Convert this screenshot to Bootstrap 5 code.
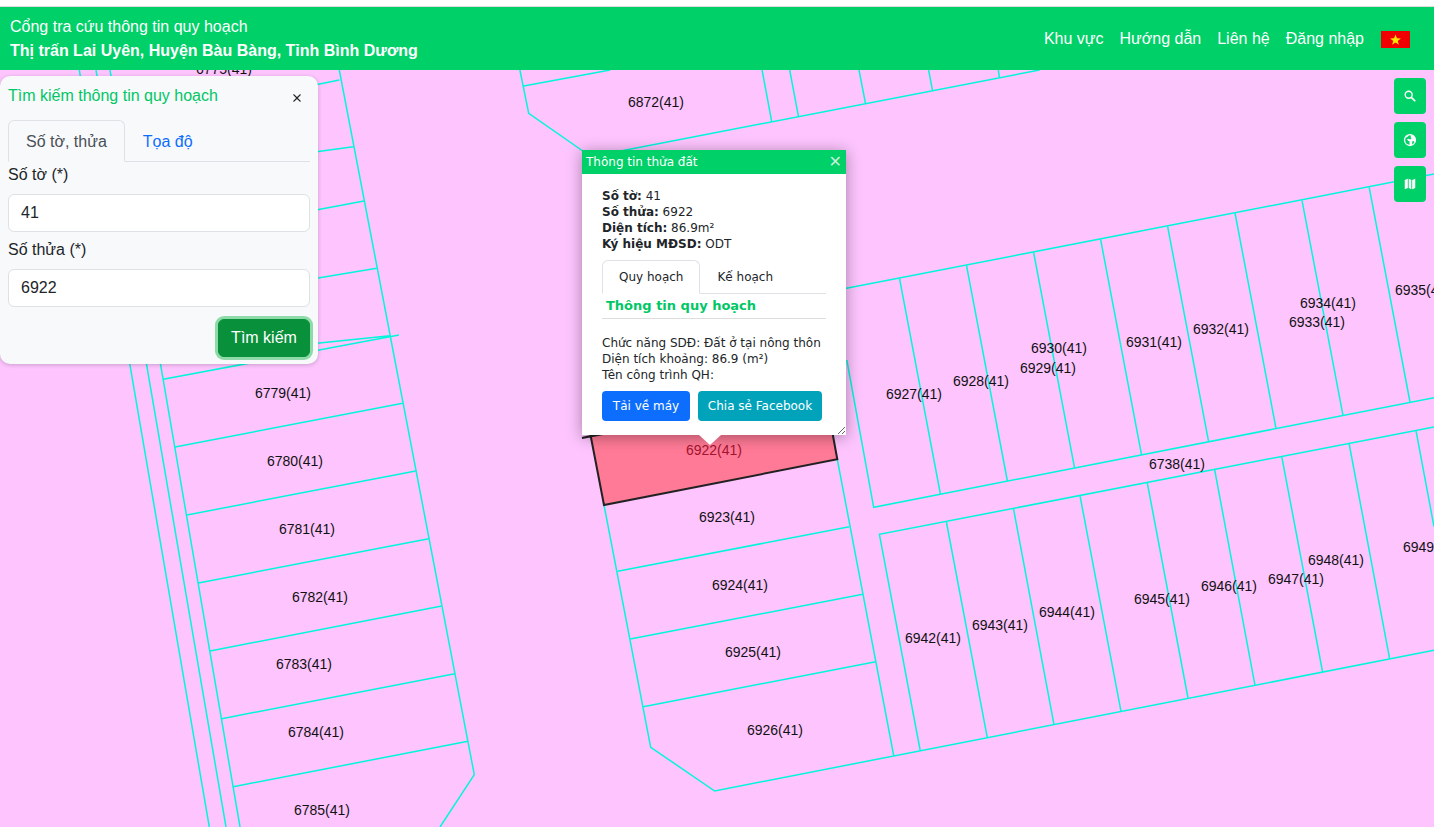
<!DOCTYPE html>
<html lang="vi">
<head>
  <meta charset="utf-8" />
  <meta name="viewport" content="width=device-width, initial-scale=1" />
  <title>Cổng tra cứu thông tin quy hoạch</title>
  <link href="https://cdn.jsdelivr.net/npm/bootstrap@5.3.2/dist/css/bootstrap.min.css" rel="stylesheet" />
  <style>
    html, body { height: 100%; }
    body {
      font-family: "Liberation Sans", Arial, sans-serif;
      overflow: hidden;
      background: #fff;
    }
    .pagina { height: 827px; padding-top: 6px; }
    .cabecera {
      height: 64px;
      background: #00d068;
      border-top: 1px solid #ddd;
      padding: 0 24px 0 10px;
      color: #fff;
      flex-shrink: 0;
    }
    .cabecera .nav-link { color: #fff; padding: 8px; }
    .cabecera-titulo { line-height: 24px; padding-top: 1px; }
    .bandera { width: 29px; height: 17px; margin-left: 9px; margin-top: 2px; display: block; }

    .mapa { background: #fdc4fe; overflow: hidden; }
    .mapa svg.capa { position: absolute; left: 0; top: 0; width: 1434px; height: 757px; }
    .lineas { fill: none; stroke: #00f7dc; stroke-width: 1.5; }
    .rotulos text { font-size: 14px; fill: #111; text-anchor: middle; font-family: "Liberation Sans", Arial, sans-serif; }
    .rotulos text.sel { fill: #a3142f; }

    .panel-busqueda {
      position: absolute;
      left: 0; top: 6px;
      width: 318px; height: 288px;
      background: #f8f9fa;
      border-radius: 10px;
      box-shadow: 0 1px 4px rgba(0,0,0,.2);
      padding: 8px;
    }
    .panel-titulo { color: #00c766; line-height: 24px; height: 36px; }
    .panel-busqueda .btn-close { width: 10px; height: 10px; padding: 0; background-size: 10px; opacity: .85; margin: 9px 8px 0 0; }
    .panel-busqueda .nav-tabs .nav-link { padding: 8px 17px; height: 42px; color: #0d6efd; line-height: 25px; }
    .panel-busqueda .nav-tabs .nav-link.active { background: #f8f9fa; color: #495057; border-bottom-color: #f8f9fa; }
    .panel-busqueda .form-label { margin: 0; line-height: 24px; height: 32px; color: #212529; display: block; padding-top: 1px; }
    .panel-busqueda .form-control { height: 38px; margin-bottom: 5px; }
    .btn-buscar {
      background: #08903a; border-color: #08903a; color: #fff;
      box-shadow: 0 0 0 3px #8edaa8;
      width: 92px; height: 38px; padding: 0;
      margin-top: 7px;
    }

    .herramientas { position: absolute; right: 8px; top: 8px; width: 32px; }
    .btn-mapa {
      width: 32px; height: 36px; padding: 0;
      background: #00d068; border-radius: 4px; border: 0;
      color: #fff;
    }
    .btn-mapa svg { width: 14px; height: 14px; display: block; }

    .emergente {
      position: absolute; left: 582px; top: 80px; width: 264px;
      font-family: "DejaVu Sans", Verdana, sans-serif;
      font-size: 12px; line-height: 16px; color: #212529;
    }
    .emergente-caja {
      background: #fff; height: 285px; width: 264px;
      box-shadow: 0 2px 14px rgba(0,0,0,.35);
      overflow: hidden; resize: both;
    }
    .emergente-titulo {
      background: #00d068; color: #fff; height: 24px; line-height: 24px;
      padding: 0 4px;
    }
    .emergente-cerrar { color: #c9eeda; font-weight: 700; font-size: 16px; line-height: 24px; }
    .emergente-cuerpo { padding: 14px 20px 0; }
    .emergente .nav-tabs { margin-top: 8px; }
    .emergente .nav-tabs .nav-link { padding: 0 16px; height: 34px; line-height: 33px; color: #212529; font-size: 12px; }
    .emergente .nav-tabs .nav-link.active { color: #212529; }
    .subtitulo { color: #00c766; font-weight: 700; padding: 3px 4px 4px; font-size: 13px; height: 25px; line-height: 18px; border-bottom: 1px solid #ddd; margin-bottom: 16px; }
    .emergente .btn { font-size: 12px; height: 30px; padding: 0; line-height: 30px; border: 0; color: #fff; border-radius: 4px; }
    .btn-bajar { width: 88px; background: #0d6efd; }
    .btn-compartir { width: 124px; background: #01a3bb; }
    .punta {
      position: absolute; left: 117px; top: 285px; width: 0; height: 0;
      border-left: 11px solid transparent; border-right: 11px solid transparent;
      border-top: 10px solid #fff;
    }
  </style>
</head>
<body>
  <div class="pagina d-flex flex-column">
    <!-- barra superior -->
    <header class="cabecera d-flex align-items-center justify-content-between">
      <div class="cabecera-titulo">
        <div>Cổng tra cứu thông tin quy hoạch</div>
        <div class="fw-bold">Thị trấn Lai Uyên, Huyện Bàu Bàng, Tỉnh Bình Dương</div>
      </div>
      <ul class="nav align-items-center">
        <li class="nav-item"><a class="nav-link" href="#">Khu vực</a></li>
        <li class="nav-item"><a class="nav-link" href="#">Hướng dẫn</a></li>
        <li class="nav-item"><a class="nav-link" href="#">Liên hệ</a></li>
        <li class="nav-item"><a class="nav-link" href="#">Đăng nhập</a></li>
        <li class="nav-item">
          <svg class="bandera" viewBox="0 0 29 17"><rect width="29" height="17" fill="#f00000"/><polygon fill="#ffe600" points="14.5,3.5 15.9,7.3 19.9,7.4 16.7,9.9 17.9,13.7 14.5,11.5 11.1,13.7 12.3,9.9 9.1,7.4 13.1,7.3"/></svg>
        </li>
      </ul>
    </header>

    <!-- mapa -->
    <main class="mapa flex-grow-1 position-relative">
      <svg class="capa" viewBox="0 70 1434 757">
        <g class="lineas">
          <!-- franja izquierda -->
          <path d="M79.3 70L209.3 827M96 70L226 827M110 70L240 827M339.3 70L474.3 774.7L440 827"/>
          <path d="M300 88L339.3 80M300 154L353.3 146.7M300 213L364 201M300 281L376.7 268.3M300 345L390 335.7M163.3 379.3L399 335M175 447L402.7 403.3M187 515L415.7 471M198.3 583L428.7 538.7M210 651L441.7 606M221.7 718.7L454.7 673.7M233.3 786.7L468 741.3"/>
          <!-- arriba centro -->
          <path d="M519.9 70L528.7 113.3L590 156M523.7 86L610.2 70M600 155L1039.6 70"/>
          <path d="M762.1 70L771.7 121.7M789.7 70L798.5 116.7M859 70L865.5 103.3M928.6 70L932.5 90.3M998.3 70L999.4 77.3"/>
          <!-- bloque central -->
          <path d="M604 505L650.7 747.3L714.7 791L1434 650.3M837.3 459.3L893.8 756"/>
          <path d="M617.7 571.3L849.3 526.7M630.3 639L862.7 594.3M643.3 706.7L875.7 661.7"/>
          <!-- bloque superior -->
          <path d="M840 289.6L1434 174M846.8 360L873.7 507.3L1434 397.7"/>
          <path d="M899.5 278.3L940.4 494M966.5 265.3L1007.4 481M1033.6 252.3L1074.5 467.7M1100.6 239.3L1141.5 454.7M1167.6 226.3L1208.6 441.7M1235 213L1276 428.3M1302 200.3L1343 415.3M1369.2 187.3L1410 402"/>
          <!-- bloque inferior -->
          <path d="M920.3 751L879.4 534.3L1434 427"/>
          <path d="M946.4 522L987.3 737.7M1013.5 508.7L1054 724.7M1080 495.7L1121 711.3M1147.2 482.3L1188 698M1214.6 469.3L1255 685.3M1281.7 456.3L1322.6 672M1349 443L1389.6 658.7M1416 430.7L1434 526.7"/>
        </g>
        <polygon points="590.7,436 604,505 837.3,459.3 825,392 582,438" fill="#ff7a96" stroke="#222" stroke-width="2"/>
        <g class="rotulos">
          <text x="224" y="74">6775(41)</text>
          <text x="656" y="107">6872(41)</text>
          <text x="283" y="398">6779(41)</text>
          <text x="295" y="466">6780(41)</text>
          <text x="307" y="534">6781(41)</text>
          <text x="320" y="602">6782(41)</text>
          <text x="304" y="669">6783(41)</text>
          <text x="316" y="737">6784(41)</text>
          <text x="322" y="815">6785(41)</text>
          <text class="sel" x="714" y="455">6922(41)</text>
          <text x="727" y="522">6923(41)</text>
          <text x="740" y="590">6924(41)</text>
          <text x="753" y="657">6925(41)</text>
          <text x="775" y="735">6926(41)</text>
          <text x="914" y="399">6927(41)</text>
          <text x="981" y="386">6928(41)</text>
          <text x="1048" y="373">6929(41)</text>
          <text x="1059" y="353">6930(41)</text>
          <text x="1154" y="347">6931(41)</text>
          <text x="1221" y="334">6932(41)</text>
          <text x="1317" y="327">6933(41)</text>
          <text x="1328" y="308">6934(41)</text>
          <text x="1423" y="295">6935(41)</text>
          <text x="1177" y="469">6738(41)</text>
          <text x="933" y="643">6942(41)</text>
          <text x="1000" y="630">6943(41)</text>
          <text x="1067" y="617">6944(41)</text>
          <text x="1162" y="604">6945(41)</text>
          <text x="1229" y="591">6946(41)</text>
          <text x="1296" y="584">6947(41)</text>
          <text x="1336" y="565">6948(41)</text>
          <text x="1431" y="552">6949(41)</text>
        </g>
      </svg>

      <!-- panel de busqueda -->
      <div class="panel-busqueda">
        <div class="panel-titulo d-flex justify-content-between align-items-start">
          <span>Tìm kiếm thông tin quy hoạch</span>
          <button type="button" class="btn-close" aria-label="Close"></button>
        </div>
        <ul class="nav nav-tabs">
          <li class="nav-item"><a class="nav-link active" href="#">Số tờ, thửa</a></li>
          <li class="nav-item"><a class="nav-link" href="#">Tọa độ</a></li>
        </ul>
        <form>
          <label class="form-label">Số tờ (*)</label>
          <input type="text" class="form-control" value="41" />
          <label class="form-label">Số thửa (*)</label>
          <input type="text" class="form-control" value="6922" />
          <div class="text-end"><button type="button" class="btn btn-buscar">Tìm kiếm</button></div>
        </form>
      </div>

      <!-- botones del mapa -->
      <div class="herramientas d-flex flex-column gap-2">
        <button type="button" class="btn-mapa d-flex align-items-center justify-content-center">
          <svg viewBox="0 0 16 16" fill="none" stroke="#fff"><circle cx="6.5" cy="6.5" r="4" stroke-width="1.6"/><path d="M9.5 9.5L14 14" stroke-width="2"/></svg>
        </button>
        <button type="button" class="btn-mapa d-flex align-items-center justify-content-center">
          <svg viewBox="0 0 16 16"><path fill="#fff" fill-rule="evenodd" d="M8 1a7 7 0 1 0 0 14A7 7 0 0 0 8 1zM3 5.5L5 4.500L7 2.500L9.500 3L8.500 4.500L10 6L8 7.500L6.500 6.500L4.500 7L6 9L7.500 9.500L7.500 13.500A5.600 5.600 0 0 1 2.500 8zM10.500 9.500L12.500 9.500L13 10.500A5.600 5.600 0 0 1 10.500 13z"/></svg>
        </button>
        <button type="button" class="btn-mapa d-flex align-items-center justify-content-center">
          <svg viewBox="0 0 16 16"><path fill="#fff" d="M2 3.500L5.500 2L5.500 12.500L2 14zM6.500 2L9.500 3.500L9.500 14L6.500 12.500zM10.500 3.500L14 2L14 12.500L10.500 14z"/></svg>
        </button>
      </div>

      <!-- ventana de informacion -->
      <div class="emergente">
        <div class="emergente-caja">
          <div class="emergente-titulo d-flex justify-content-between">
            <span>Thông tin thửa đất</span>
            <span class="emergente-cerrar">✕</span>
          </div>
          <div class="emergente-cuerpo">
            <div><b>Số tờ:</b> 41</div>
            <div><b>Số thửa:</b> 6922</div>
            <div><b>Diện tích:</b> 86.9m²</div>
            <div><b>Ký hiệu MĐSD:</b> ODT</div>
            <ul class="nav nav-tabs">
              <li class="nav-item"><a class="nav-link active" href="#">Quy hoạch</a></li>
              <li class="nav-item"><a class="nav-link" href="#">Kế hoạch</a></li>
            </ul>
            <div class="subtitulo">Thông tin quy hoạch</div>
            <div>Chức năng SDĐ: Đất ở tại nông thôn</div>
            <div>Diện tích khoảng: 86.9 (m²)</div>
            <div>Tên công trình QH:</div>
            <div class="d-flex gap-2 mt-2">
              <button type="button" class="btn btn-bajar">Tải về máy</button>
              <button type="button" class="btn btn-compartir">Chia sẻ Facebook</button>
            </div>
          </div>
        </div>
        <div class="punta"></div>
      </div>
    </main>
  </div>

  <script src="https://cdn.jsdelivr.net/npm/bootstrap@5.3.2/dist/js/bootstrap.bundle.min.js"></script>
</body>
</html>
